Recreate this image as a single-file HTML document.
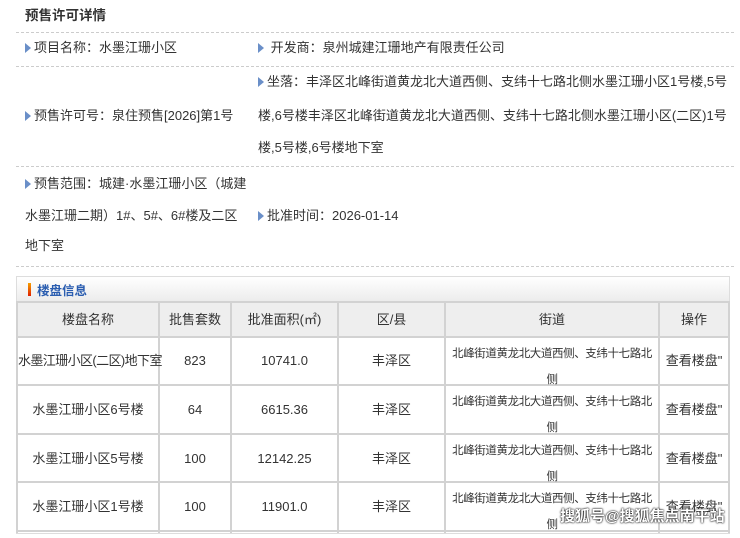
<!DOCTYPE html>
<html><head><meta charset="utf-8"><style>
*{margin:0;padding:0;box-sizing:border-box}
body{width:740px;height:536px;background:#fff;font-family:"Liberation Sans","Noto Sans CJK SC",sans-serif;font-size:13px;color:#333;position:relative;overflow:hidden}
.a{position:absolute;white-space:nowrap;line-height:16px}
.d{position:absolute;left:16px;width:718px;border-top:1px dashed #ccc;height:0}
.tri{display:inline-block;width:0;height:0;border-top:5px solid transparent;border-bottom:5px solid transparent;border-left:6px solid #6a8fc8;margin-right:3px;vertical-align:-1px}
.box{position:absolute;left:16px;top:276px;width:714px;height:258px;border:1px solid #ddd;background:#fff}
.hd{position:absolute;left:0;top:0;width:712px;height:25px;background:linear-gradient(#fff,#ececec);border-bottom:1px solid #ddd}
.v{position:absolute;top:302px;height:231px;width:2px;background:#d2d2d2}
.h{position:absolute;left:16px;width:714px;height:2px;background:#d2d2d2}
.c{position:absolute;text-align:center;line-height:16px;white-space:nowrap}
.s{position:absolute;left:446px;width:212px;text-align:center;line-height:26px;white-space:nowrap;font-size:11.5px;letter-spacing:-0.4px}
</style></head><body>
<div class="a" style="left:25px;top:8px;font-weight:bold;font-size:13.5px">预售许可详情</div>
<div class="d" style="top:32px"></div>
<div class="a" style="left:25px;top:40px"><span class="tri"></span>项目名称：水墨江珊小区</div>
<div class="a" style="left:258px;top:40px"><span class="tri"></span> 开发商：泉州城建江珊地产有限责任公司</div>
<div class="d" style="top:66px"></div>
<div class="a" style="left:258px;top:74px"><span class="tri"></span>坐落：丰泽区北峰街道黄龙北大道西侧、支纬十七路北侧水墨江珊小区1号楼,5号</div>
<div class="a" style="left:258px;top:108px">楼,6号楼丰泽区北峰街道黄龙北大道西侧、支纬十七路北侧水墨江珊小区(二区)1号</div>
<div class="a" style="left:258px;top:140px">楼,5号楼,6号楼地下室</div>
<div class="a" style="left:25px;top:108px"><span class="tri"></span>预售许可号：泉住预售[2026]第1号</div>
<div class="d" style="top:166px"></div>
<div class="a" style="left:25px;top:176px"><span class="tri"></span>预售范围：城建·水墨江珊小区（城建</div>
<div class="a" style="left:25px;top:208px">水墨江珊二期）1#、5#、6#楼及二区</div>
<div class="a" style="left:25px;top:238px">地下室</div>
<div class="a" style="left:258px;top:208px"><span class="tri"></span>批准时间：2026-01-14</div>
<div class="d" style="top:266px"></div>
<div class="box"><div class="hd"></div></div>
<div style="position:absolute;left:28px;top:283px;width:3px;height:13px;background:linear-gradient(#f5a000,#e02000)"></div>
<div class="a" style="left:37px;top:283px;color:#2a5db0;font-weight:bold;font-size:12.5px">楼盘信息</div>
<div style="position:absolute;left:16px;top:302px;width:714px;height:35px;background:#eee"></div>
<div class="h" style="top:301px"></div>
<div class="h" style="top:336px"></div>
<div class="h" style="top:384px"></div>
<div class="h" style="top:433px"></div>
<div class="h" style="top:481px"></div>
<div class="h" style="top:530px"></div>
<div class="v" style="left:16px"></div>
<div class="v" style="left:158px"></div>
<div class="v" style="left:230px"></div>
<div class="v" style="left:337px"></div>
<div class="v" style="left:444px"></div>
<div class="v" style="left:658px"></div>
<div class="v" style="left:728px"></div>
<div class="c" style="left:18px;width:140px;top:312px">楼盘名称</div>
<div class="c" style="left:160px;width:70px;top:312px">批售套数</div>
<div class="c" style="left:232px;width:105px;top:312px">批准面积(㎡)</div>
<div class="c" style="left:339px;width:105px;top:312px">区/县</div>
<div class="c" style="left:446px;width:212px;top:312px">街道</div>
<div class="c" style="left:660px;width:68px;top:312px">操作</div>

<div class="c" style="left:18px;width:140px;top:353px;letter-spacing:-0.6px">水墨江珊小区(二区)地下室</div>
<div class="c" style="left:160px;width:70px;top:353px">823</div>
<div class="c" style="left:232px;width:105px;top:353px">10741.0</div>
<div class="c" style="left:339px;width:105px;top:353px">丰泽区</div>
<div class="s" style="top:341px">北峰街道黄龙北大道西侧、支纬十七路北<br>侧</div>
<div class="c" style="left:660px;width:68px;top:353px">查看楼盘"</div>

<div class="c" style="left:18px;width:140px;top:402px">水墨江珊小区6号楼</div>
<div class="c" style="left:160px;width:70px;top:402px">64</div>
<div class="c" style="left:232px;width:105px;top:402px">6615.36</div>
<div class="c" style="left:339px;width:105px;top:402px">丰泽区</div>
<div class="s" style="top:389px">北峰街道黄龙北大道西侧、支纬十七路北<br>侧</div>
<div class="c" style="left:660px;width:68px;top:402px">查看楼盘"</div>

<div class="c" style="left:18px;width:140px;top:451px">水墨江珊小区5号楼</div>
<div class="c" style="left:160px;width:70px;top:451px">100</div>
<div class="c" style="left:232px;width:105px;top:451px">12142.25</div>
<div class="c" style="left:339px;width:105px;top:451px">丰泽区</div>
<div class="s" style="top:438px">北峰街道黄龙北大道西侧、支纬十七路北<br>侧</div>
<div class="c" style="left:660px;width:68px;top:451px">查看楼盘"</div>

<div class="c" style="left:18px;width:140px;top:499px">水墨江珊小区1号楼</div>
<div class="c" style="left:160px;width:70px;top:499px">100</div>
<div class="c" style="left:232px;width:105px;top:499px">11901.0</div>
<div class="c" style="left:339px;width:105px;top:499px">丰泽区</div>
<div class="s" style="top:486px">北峰街道黄龙北大道西侧、支纬十七路北<br>侧</div>
<div class="c" style="left:660px;width:68px;top:499px">查看楼盘"</div>

<div class="a" style="left:560px;top:509px;font-size:15px;font-weight:bold;color:#fff;text-shadow:0 0 2px #000,0 0 1px #000">搜狐号@搜狐焦点南平站</div>
</body></html>
